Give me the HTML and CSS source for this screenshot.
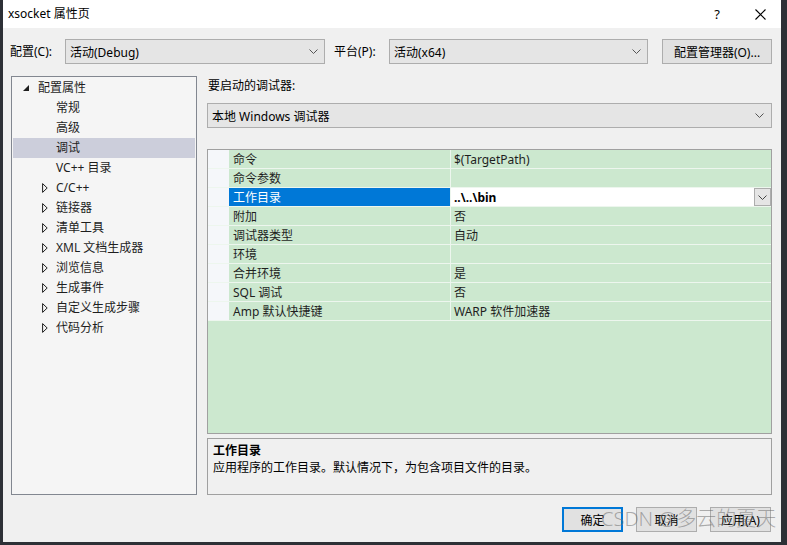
FILE: index.html
```html
<!DOCTYPE html>
<html>
<head>
<meta charset="utf-8">
<title>xsocket 属性页</title>
<link rel="stylesheet" href="styles.css">
</head>
<body>
<div class="window">
  <div class="titlebar">
    <span class="title">xsocket 属性页</span>
    <span class="tb-help">?</span>
    <span class="tb-close"><svg width="11" height="11" viewBox="0 0 11 11"><path d="M0.5 0.5 L10.5 10.5 M10.5 0.5 L0.5 10.5" stroke="#000" stroke-width="1.1" fill="none"/></svg></span>
  </div>

  <div class="toolbar">
    <span class="lbl">配置(C):</span>
    <div class="select sel-config"><span class="sel-text">活动(Debug)</span><svg class="chev" width="9" height="5" viewBox="0 0 9 5"><path d="M0.5 0.5 L4.5 4.5 L8.5 0.5" stroke="#555" fill="none"/></svg></div>
    <span class="lbl lbl-plat">平台(P):</span>
    <div class="select sel-plat"><span class="sel-text">活动(x64)</span><svg class="chev" width="9" height="5" viewBox="0 0 9 5"><path d="M0.5 0.5 L4.5 4.5 L8.5 0.5" stroke="#555" fill="none"/></svg></div>
    <div class="btn btn-mgr">配置管理器(O)...</div>
  </div>

  <div class="main">
    <div class="tree">
      <div class="node root"><span class="twisty"><svg width="6" height="6" viewBox="0 0 6 6"><polygon points="6,0 6,6 0,6" fill="#1e1e1e"/></svg></span><span>配置属性</span></div>
      <div class="node leaf"><span>常规</span></div>
      <div class="node leaf"><span>高级</span></div>
      <div class="node leaf selected"><span>调试</span></div>
      <div class="node leaf"><span>VC++ 目录</span></div>
      <div class="node child"><span class="twisty"><svg width="6" height="10" viewBox="0 0 6 10"><polygon points="0.6,0.6 5.2,5 0.6,9.4" fill="none" stroke="#1e1e1e" stroke-width="1"/></svg></span><span>C/C++</span></div>
      <div class="node child"><span class="twisty"><svg width="6" height="10" viewBox="0 0 6 10"><polygon points="0.6,0.6 5.2,5 0.6,9.4" fill="none" stroke="#1e1e1e" stroke-width="1"/></svg></span><span>链接器</span></div>
      <div class="node child"><span class="twisty"><svg width="6" height="10" viewBox="0 0 6 10"><polygon points="0.6,0.6 5.2,5 0.6,9.4" fill="none" stroke="#1e1e1e" stroke-width="1"/></svg></span><span>清单工具</span></div>
      <div class="node child"><span class="twisty"><svg width="6" height="10" viewBox="0 0 6 10"><polygon points="0.6,0.6 5.2,5 0.6,9.4" fill="none" stroke="#1e1e1e" stroke-width="1"/></svg></span><span>XML 文档生成器</span></div>
      <div class="node child"><span class="twisty"><svg width="6" height="10" viewBox="0 0 6 10"><polygon points="0.6,0.6 5.2,5 0.6,9.4" fill="none" stroke="#1e1e1e" stroke-width="1"/></svg></span><span>浏览信息</span></div>
      <div class="node child"><span class="twisty"><svg width="6" height="10" viewBox="0 0 6 10"><polygon points="0.6,0.6 5.2,5 0.6,9.4" fill="none" stroke="#1e1e1e" stroke-width="1"/></svg></span><span>生成事件</span></div>
      <div class="node child"><span class="twisty"><svg width="6" height="10" viewBox="0 0 6 10"><polygon points="0.6,0.6 5.2,5 0.6,9.4" fill="none" stroke="#1e1e1e" stroke-width="1"/></svg></span><span>自定义生成步骤</span></div>
      <div class="node child"><span class="twisty"><svg width="6" height="10" viewBox="0 0 6 10"><polygon points="0.6,0.6 5.2,5 0.6,9.4" fill="none" stroke="#1e1e1e" stroke-width="1"/></svg></span><span>代码分析</span></div>
    </div>

    <div class="right">
      <div class="dbg-label">要启动的调试器:</div>
      <div class="select sel-dbg"><span class="sel-text">本地 Windows 调试器</span><svg class="chev" width="9" height="5" viewBox="0 0 9 5"><path d="M0.5 0.5 L4.5 4.5 L8.5 0.5" stroke="#555" fill="none"/></svg></div>

      <div class="grid">
        <div class="row"><span class="gutter"></span><span class="name">命令</span><span class="value">$(TargetPath)</span></div>
        <div class="row"><span class="gutter"></span><span class="name">命令参数</span><span class="value"></span></div>
        <div class="row sel"><span class="gutter"></span><span class="name">工作目录</span><span class="value edit"><b>..\..\bin</b><span class="dd"><svg width="9" height="5" viewBox="0 0 9 5"><path d="M0.5 0.5 L4.5 4.5 L8.5 0.5" stroke="#444" fill="none"/></svg></span></span></div>
        <div class="row"><span class="gutter"></span><span class="name">附加</span><span class="value">否</span></div>
        <div class="row"><span class="gutter"></span><span class="name">调试器类型</span><span class="value">自动</span></div>
        <div class="row"><span class="gutter"></span><span class="name">环境</span><span class="value"></span></div>
        <div class="row"><span class="gutter"></span><span class="name">合并环境</span><span class="value">是</span></div>
        <div class="row"><span class="gutter"></span><span class="name">SQL 调试</span><span class="value">否</span></div>
        <div class="row"><span class="gutter"></span><span class="name">Amp 默认快捷键</span><span class="value">WARP 软件加速器</span></div>
      </div>

      <div class="desc">
        <div class="desc-title">工作目录</div>
        <div class="desc-text">应用程序的工作目录。默认情况下，为包含项目文件的目录。</div>
      </div>
    </div>
  </div>

  <div class="footer">
    <div class="btn fbtn default">确定</div>
    <div class="btn fbtn">取消</div>
    <div class="btn fbtn">应用(A)</div>
  </div>

  <div class="watermark">CSDN @多云的夏天</div>
</div>
</body>
</html>
```

FILE: styles.css
```css
* { box-sizing: border-box; }
html, body {
  margin: 0;
  padding: 0;
  background: #2d3036;
  width: 787px;
  height: 545px;
  overflow: hidden;
}
body {
  font-family: "Noto Sans", "Noto Sans CJK SC", sans-serif;
  font-size: 12px;
  color: #1e1e1e;
}
.window {
  position: relative;
  margin-left: 3px;
  width: 778px;
  height: 542px;
  background: #f0f0f0;
  display: flex;
  flex-direction: column;
}
.titlebar {
  height: 28px;
  background: #ffffff;
  display: flex;
  align-items: center;
  padding-left: 5px;
}
.title { flex: 1; font-size: 12px; color: #000; line-height: 28px; }
.tb-help {
  width: 24px;
  text-align: center;
  font-size: 13px;
  color: #000;
  margin-right: 26px;
}
.tb-close {
  width: 11px;
  height: 11px;
  margin-right: 15px;
  display: flex;
}

.toolbar {
  margin-top: 11px;
  height: 25px;
  display: flex;
  align-items: center;
  padding-left: 7px;
}
.lbl { width: 55px; line-height: 25px; color: #000; }
.lbl-plat { margin-left: 9px; }
.select {
  height: 25px;
  background: #e5e5e5;
  border: 1px solid #adadad;
  display: flex;
  align-items: center;
  padding-left: 4px;
  padding-right: 6px;
}
.sel-text { flex: 1; color: #000; white-space: nowrap; }
.chev { display: block; }
.sel-config { width: 260px; }
.sel-plat { width: 259px; }
.btn {
  height: 25px;
  background: #e1e1e1;
  border: 1px solid #adadad;
  display: flex;
  align-items: center;
  justify-content: center;
  color: #000;
}
.btn-mgr { margin-left: 14px; width: 110px; }

.main {
  margin-top: 12px;
  display: flex;
  padding-left: 8px;
}
.tree {
  width: 186px;
  height: 419px;
  background: #f5f5f5;
  border: 1px solid #828790;
  padding-top: 1px;
}
.node {
  height: 20px;
  margin: 0 1px;
  display: flex;
  align-items: center;
  line-height: 20px;
  white-space: nowrap;
  color: #1e1e1e;
}
.node.selected { background: #cccedb; }
.twisty { display: flex; align-items: center; }
.root { padding-left: 10px; }
.root .twisty { width: 15px; }
.leaf { padding-left: 43px; }
.child { padding-left: 29px; }
.child .twisty { width: 14px; }

.right {
  margin-left: 10px;
  width: 565px;
  display: flex;
  flex-direction: column;
}
.dbg-label { height: 20px; line-height: 20px; color: #000; padding-left: 1px; }
.sel-dbg { margin-top: 7px; width: 565px; padding-left: 4px; padding-right: 7px; }

.grid {
  margin-top: 21px;
  height: 285px;
  border: 1px solid #a0a0a0;
  background: #cce8cf;
}
.row {
  height: 19px;
  display: flex;
  border-bottom: 1px solid #edf6ee;
}
.gutter {
  width: 21px;
  background: #f5f7fa;
  flex: none;
}
.name {
  width: 222px;
  flex: none;
  padding-left: 4px;
  padding-top: 2px;
  line-height: 16px;
  border-right: 1px solid #edf6ee;
  white-space: nowrap;
}
.value {
  flex: 1;
  padding-left: 3px;
  padding-top: 2px;
  line-height: 16px;
  white-space: nowrap;
}
.row.sel .name { background: #0078d7; color: #fff; }
.row.sel .value.edit {
  background: #ffffff;
  display: flex;
  align-items: center;
  color: #000;
  padding-top: 0;
}
.value.edit b { flex: 1; font-weight: bold; padding-top: 2px; }
.dd {
  width: 17px;
  height: 18px;
  background: #e5e5e5;
  border: 1px solid #adadad;
  display: flex;
  align-items: center;
  justify-content: center;
}

.desc {
  margin-top: 4px;
  height: 57px;
  border: 1px solid #a0a0a0;
  background: #f0f0f0;
  padding: 3px 5px 2px;
}
.desc-title { font-weight: bold; line-height: 17px; color: #000; }
.desc-text { line-height: 18px; color: #000; }

.footer {
  margin-top: 12px;
  display: flex;
  justify-content: flex-end;
  gap: 13px;
  padding-right: 10px;
}
.fbtn { width: 61px; }
.fbtn.default { border: 2px solid #0078d7; }

.watermark {
  position: absolute;
  left: 598px;
  top: 503px;
  font-size: 20px;
  line-height: 32px;
  color: rgba(110, 110, 110, 0.55);
  white-space: nowrap;
  pointer-events: none;
  font-family: "Noto Sans", "Noto Sans CJK SC", sans-serif;
  font-weight: 300;
}
```
